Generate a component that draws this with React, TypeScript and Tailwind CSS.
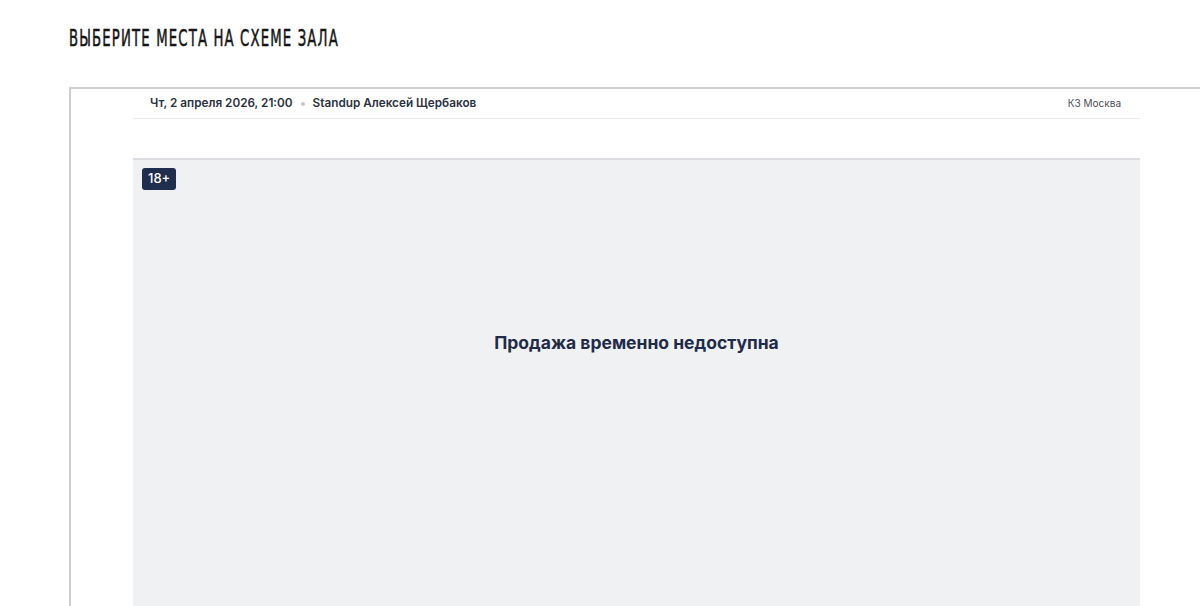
export default function App() {
  return (
    <div className="h-[606px] w-[1200px] overflow-hidden bg-white" style={{ fontFamily: "Inter, 'Noto Sans', sans-serif" }}>
      {/* Заголовок */}
      <div className="pl-[69px] pt-[26px] h-[87px]">
        <h1
          className="text-[23px] leading-[24px] uppercase tracking-[1.8px] text-[#151515] scale-x-[0.64] origin-left whitespace-nowrap [-webkit-text-stroke:0.5px_#151515]"
          style={{ fontFamily: "'Liberation Sans Narrow', 'DejaVu Sans Condensed', sans-serif" }}
        >
          Выберите места на схеме зала
        </h1>
      </div>

      {/* Рамка виджета */}
      <div className="ml-[69px] w-[1133px] h-[600px] border-l-2 border-t-2 border-[#cfcfcf]">
        <div className="mx-auto w-[1007px]">
          {/* Шапка события */}
          <div className="flex items-center justify-between h-[30px] border-b border-[#ececef] pl-[17px] pr-[19px]">
            <div className="flex items-center text-[11.75px] font-semibold text-[#2a3242]">
              <span>Чт, 2 апреля 2026, 21:00</span>
              <span className="mx-[8px] w-[4px] h-[4px] rounded-full bg-[#c4c8cf]"></span>
              <span>Standup Алексей Щербаков</span>
            </div>
            <div className="text-[10px] text-[#4a4f58]">КЗ Москва</div>
          </div>

          {/* Схема зала */}
          <div className="mt-[39px] h-[500px] bg-[#f0f1f3] border-t-2 border-[#dcdde0] relative">
            <div className="absolute left-[9px] top-[8px] h-[22px] px-[6px] rounded-[3px] bg-[#1f2d4f] text-white text-[13px] font-medium flex items-center">
              18+
            </div>
            <div className="pt-[170px] text-center text-[17.5px] font-bold text-[#1f2b48]">
              Продажа временно недоступна
            </div>
          </div>
        </div>
      </div>
    </div>
  );
}
